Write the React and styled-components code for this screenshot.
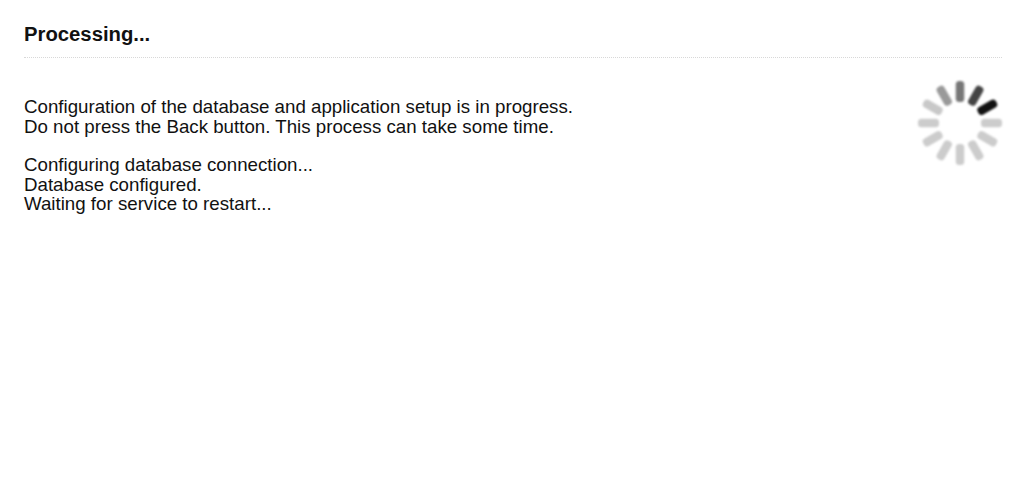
import styled, { createGlobalStyle } from 'styled-components';

const GlobalStyle = createGlobalStyle`
  html, body {
    margin: 0;
    padding: 0;
    background: #fff;
  }
  body {
    font-family: "Liberation Sans", Arial, sans-serif;
    color: #111;
  }
`;

const Page = styled.div`
  padding: 24px 24px 0;
  width: 1024px;
  height: 495px;
  box-sizing: border-box;
`;

const Title = styled.h1`
  margin: 0;
  padding-bottom: 13px;
  font-size: 20.3px;
  line-height: 20px;
  font-weight: 700;
  border-bottom: 1px dotted #d8d8d8;
  width: 978px;
`;

const Body = styled.div`
  display: flex;
  justify-content: space-between;
  align-items: flex-start;
  width: 978px;
  padding-top: 21px;
`;

const Messages = styled.div`
  display: flex;
  flex-direction: column;
  gap: 19px;
  padding-top: 18px;
`;

const Paragraph = styled.p`
  margin: 0;
  font-size: 18.72px;
  line-height: 19.5px;
`;

const SpinnerSvg = styled.svg`
  display: block;
  width: 88px;
  height: 88px;
  margin-right: -1.5px;
  filter: blur(1px);
`;

const spokes = [
  ['0', '#777'],
  ['30', '#444'],
  ['60', '#111'],
  ['90', '#ccc'],
  ['120', '#ccc'],
  ['150', '#ccc'],
  ['180', '#ccc'],
  ['210', '#ccc'],
  ['240', '#ccc'],
  ['270', '#ccc'],
  ['300', '#c8c8c8'],
  ['330', '#999'],
];

function Spinner() {
  return (
    <SpinnerSvg viewBox="0 0 88 88">
      {spokes.map(([angle, colour]) => (
        <rect
          key={angle}
          x="39.75"
          y="2"
          width="8.5"
          height="21"
          rx="3.5"
          fill={colour}
          transform={`rotate(${angle} 44 44)`}
        />
      ))}
    </SpinnerSvg>
  );
}

export default function App() {
  return (
    <Page>
      <GlobalStyle />
      <Title>Processing...</Title>
      <Body>
        <Messages>
          <Paragraph>
            Configuration of the database and application setup is in progress.
            <br />
            Do not press the Back button. This process can take some time.
          </Paragraph>
          <Paragraph>
            Configuring database connection...
            <br />
            Database configured.
            <br />
            Waiting for service to restart...
          </Paragraph>
        </Messages>
        <Spinner />
      </Body>
    </Page>
  );
}
